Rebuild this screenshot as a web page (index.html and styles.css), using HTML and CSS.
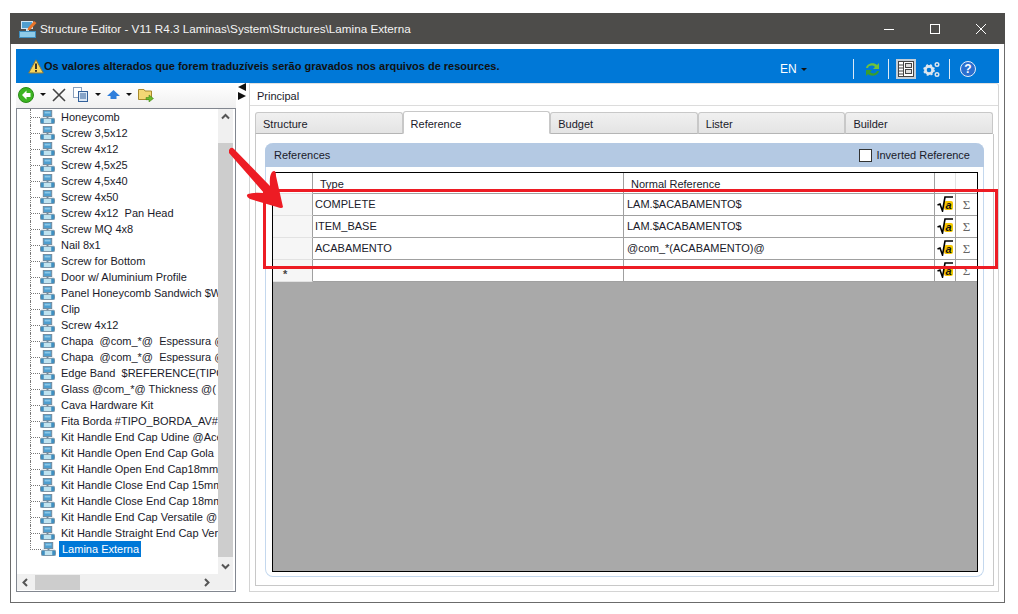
FILE: index.html
```html
<!DOCTYPE html>
<html>

<head>
  <title>Structure Editor</title>
  <link rel="stylesheet" href="styles.css">
</head>
<body>
  <svg class="defs" width="0" height="0">
    <symbol id="node" viewBox="0 0 16 16" preserveAspectRatio="none">
      <rect x="3.5" y="0.5" width="9" height="7" fill="#4f9fd0" stroke="#6f8799"/>
      <rect x="5" y="2" width="6" height="2" fill="#8cc8e8"/>
      <rect x="7" y="8" width="2" height="2" fill="#6f8799"/>
      <rect x="0.5" y="9.5" width="15" height="6" rx="1" fill="#bfe3f0" stroke="#6f8799"/>
      <rect x="1" y="10" width="3" height="5" fill="#3f8fc0"/>
      <rect x="12" y="10" width="3" height="5" fill="#3f8fc0"/>
    </symbol>
    <symbol id="sqrt" viewBox="0 0 17 16">
      <rect x="7" y="5" width="9" height="9" rx="2" fill="#f7c600"/>
      <path d="M0.5 9 L3 8 L5.5 15 L8 1 H16" fill="none" stroke="#000" stroke-width="1.6"/>
      <text x="8.5" y="13" class="sqrt-a">a</text>
    </symbol>
  </svg>

  <div class="window">
    <div class="titlebar">
      <svg class="app-icon" width="18" height="18" viewBox="0 0 18 18">
        <rect x="2.5" y="1.5" width="11" height="7" fill="#4f9fd0" stroke="#cfe6f4"/>
        <rect x="7" y="9" width="3" height="2" fill="#cfe6f4"/>
        <rect x="0.5" y="11.5" width="16" height="6" fill="#8fcbe8" stroke="#3f8fc0"/>
        <path d="M9 8 L15 1 L17.5 3 L11.5 9.5 L8.5 10.5 Z" fill="#e8752a"/>
      </svg>
      <span class="title">Structure Editor - V11 R4.3 Laminas\System\Structures\Lamina Externa</span>
      <div class="win-buttons">
        <svg width="12" height="12" viewBox="0 0 12 12"><path d="M1 6.5H11" stroke="#fff"/></svg>
        <svg width="12" height="12" viewBox="0 0 12 12"><rect x="1.5" y="1.5" width="9" height="9" fill="none" stroke="#fff"/></svg>
        <svg width="12" height="12" viewBox="0 0 12 12"><path d="M1 1L11 11M11 1L1 11" stroke="#fff"/></svg>
      </div>
    </div>

    <div class="content">
      <div class="notice">
        <svg class="warn" width="16" height="15" viewBox="0 0 16 15">
          <path d="M8 0.8 L15.3 14 H0.7 Z" fill="#f6d55c" stroke="#8a7a40"/>
          <rect x="7.1" y="4.5" width="1.8" height="5.5" fill="#222"/>
          <rect x="7.1" y="11" width="1.8" height="1.8" fill="#222"/>
        </svg>
        <b class="notice-text">Os valores alterados que forem traduzíveis serão gravados nos arquivos de resources.</b>
        <div class="notice-tools">
          <span class="lang">EN</span><span class="caret white-caret"></span>
          <span class="vsep sep1"></span>
          <svg class="sync" width="17" height="17" viewBox="0 0 17 17">
            <path d="M2 7 C3 2 10 1 13 4 L15 2 V8 H9 L11 6 C9 4 5 4 4 7 Z" fill="#6fc23c"/>
            <path d="M15 10 C14 15 7 16 4 13 L2 15 V9 H8 L6 11 C8 13 12 13 13 10 Z" fill="#3a9e2c"/>
          </svg>
          <span class="vsep sep2"></span>
          <span class="panel-btn">
            <svg width="16" height="16" viewBox="0 0 16 16">
              <rect x="0.5" y="0.5" width="15" height="15" fill="#fff" stroke="#444"/>
              <path d="M5.5 1V15M1 4H5M1 7H5M1 10H5M1 13H5" stroke="#444"/>
              <rect x="7.5" y="2.5" width="6" height="4" fill="#ddd" stroke="#444"/>
              <rect x="7.5" y="8.5" width="6" height="4" fill="#ddd" stroke="#444"/>
            </svg>
          </span>
          <svg class="gears" width="17" height="17" viewBox="0 0 17 17">
            <circle cx="6" cy="9" r="3.6" fill="none" stroke="#dfe6ee" stroke-width="2.6"/>
            <circle cx="6" cy="9" r="5" fill="none" stroke="#dfe6ee" stroke-width="1.6" stroke-dasharray="2 2"/>
            <circle cx="14" cy="3.5" r="1.8" fill="none" stroke="#dfe6ee" stroke-width="1.4"/>
            <circle cx="14" cy="13.5" r="1.8" fill="none" stroke="#dfe6ee" stroke-width="1.4"/>
          </svg>
          <span class="vsep sep3"></span>
          <span class="help">?</span>
        </div>
      </div>

      <div class="main">
        <div class="left">
          <div class="toolbar">
            <svg width="16" height="16" viewBox="0 0 16 16">
              <circle cx="8" cy="8" r="7.5" fill="#3cb521" stroke="#2a8a18"/>
              <path d="M8.5 3.5 L4 8 L8.5 12.5 V10 H12.5 V6 H8.5 Z" fill="#fff"/>
            </svg>
            <span class="caret"></span>
            <svg class="tool-x" width="14" height="14" viewBox="0 0 14 14"><path d="M1 1L13 13M13 1L1 13" stroke="#444" stroke-width="1.6"/></svg>
            <svg class="tool-copy" width="16" height="15" viewBox="0 0 16 15">
              <rect x="0.5" y="0.5" width="8" height="10" fill="#fff" stroke="#8aa0bb"/>
              <rect x="5.5" y="4.5" width="9" height="10" fill="#dbe8f6" stroke="#33609a"/>
              <path d="M7 7H13M7 9H13M7 11H13" stroke="#33609a"/>
            </svg>
            <span class="caret"></span>
            <svg class="tool-up" width="13" height="9" viewBox="0 0 13 9"><path d="M6.5 0L13 6H9.5V9H3.5V6H0Z" fill="#2f7fdc"/></svg>
            <span class="caret"></span>
            <svg class="tool-folder" width="16" height="15" viewBox="0 0 16 15">
              <path d="M0.5 2.5H6L7 4H13.5V12.5H0.5Z" fill="#f3d774" stroke="#a78a2c"/>
              <path d="M8 10.5H11V8L15.5 11.5L11 15V12.7H8Z" fill="#6cbb2c" stroke="#3a7d12" stroke-width="0.5"/>
            </svg>
          </div>
          <div class="tree">
            <div class="tree-rows">
              <div class="node"><svg class="node-icon"><use href="#node"/></svg><span>Honeycomb</span></div>
              <div class="node"><svg class="node-icon"><use href="#node"/></svg><span>Screw 3,5x12</span></div>
              <div class="node"><svg class="node-icon"><use href="#node"/></svg><span>Screw 4x12</span></div>
              <div class="node"><svg class="node-icon"><use href="#node"/></svg><span>Screw 4,5x25</span></div>
              <div class="node"><svg class="node-icon"><use href="#node"/></svg><span>Screw 4,5x40</span></div>
              <div class="node"><svg class="node-icon"><use href="#node"/></svg><span>Screw 4x50</span></div>
              <div class="node"><svg class="node-icon"><use href="#node"/></svg><span>Screw 4x12&nbsp; Pan Head</span></div>
              <div class="node"><svg class="node-icon"><use href="#node"/></svg><span>Screw MQ 4x8</span></div>
              <div class="node"><svg class="node-icon"><use href="#node"/></svg><span>Nail 8x1</span></div>
              <div class="node"><svg class="node-icon"><use href="#node"/></svg><span>Screw for Bottom</span></div>
              <div class="node"><svg class="node-icon"><use href="#node"/></svg><span>Door w/ Aluminium Profile</span></div>
              <div class="node"><svg class="node-icon"><use href="#node"/></svg><span>Panel Honeycomb Sandwich $W</span></div>
              <div class="node"><svg class="node-icon"><use href="#node"/></svg><span>Clip</span></div>
              <div class="node"><svg class="node-icon"><use href="#node"/></svg><span>Screw 4x12</span></div>
              <div class="node"><svg class="node-icon"><use href="#node"/></svg><span>Chapa&nbsp; @com_*@&nbsp; Espessura @</span></div>
              <div class="node"><svg class="node-icon"><use href="#node"/></svg><span>Chapa&nbsp; @com_*@&nbsp; Espessura @</span></div>
              <div class="node"><svg class="node-icon"><use href="#node"/></svg><span>Edge Band&nbsp; $REFERENCE(TIPO</span></div>
              <div class="node"><svg class="node-icon"><use href="#node"/></svg><span>Glass @com_*@ Thickness @(</span></div>
              <div class="node"><svg class="node-icon"><use href="#node"/></svg><span>Cava Hardware Kit</span></div>
              <div class="node"><svg class="node-icon"><use href="#node"/></svg><span>Fita Borda #TIPO_BORDA_AV#</span></div>
              <div class="node"><svg class="node-icon"><use href="#node"/></svg><span>Kit Handle End Cap Udine @Ace</span></div>
              <div class="node"><svg class="node-icon"><use href="#node"/></svg><span>Kit Handle Open End Cap Gola</span></div>
              <div class="node"><svg class="node-icon"><use href="#node"/></svg><span>Kit Handle Open End Cap18mm</span></div>
              <div class="node"><svg class="node-icon"><use href="#node"/></svg><span>Kit Handle Close End Cap 15mm</span></div>
              <div class="node"><svg class="node-icon"><use href="#node"/></svg><span>Kit Handle Close End Cap 18mm</span></div>
              <div class="node"><svg class="node-icon"><use href="#node"/></svg><span>Kit Handle End Cap Versatile @</span></div>
              <div class="node"><svg class="node-icon"><use href="#node"/></svg><span>Kit Handle Straight End Cap Ver</span></div>
              <div class="node last"><svg class="node-icon"><use href="#node"/></svg><span class="selected">Lamina Externa</span></div>
            </div>
            <div class="vscroll">
              <svg width="15" height="16" viewBox="0 0 15 16"><path d="M4 9.5L7.5 6L11 9.5" fill="none" stroke="#555" stroke-width="2"/></svg>
              <div class="vthumb"></div>
              <svg width="15" height="16" viewBox="0 0 15 16"><path d="M4 6.5L7.5 10L11 6.5" fill="none" stroke="#555" stroke-width="2"/></svg>
            </div>
            <div class="hscroll">
              <svg width="18" height="15" viewBox="0 0 18 15"><path d="M10 4L6.5 7.5L10 11" fill="none" stroke="#555" stroke-width="2"/></svg>
              <div class="hthumb"></div>
              <svg class="hright" width="18" height="15" viewBox="0 0 18 15"><path d="M7 4L10.5 7.5L7 11" fill="none" stroke="#555" stroke-width="2"/></svg>
            </div>
          </div>
        </div>

        <div class="splitter">
          <span class="tri-left"></span>
          <span class="tri-right"></span>
        </div>

        <div class="right">
          <div class="principal">Principal</div>
          <div class="tabs">
            <div class="tab">Structure</div>
            <div class="tab active">Reference</div>
            <div class="tab">Budget</div>
            <div class="tab">Lister</div>
            <div class="tab">Builder</div>
          </div>
          <div class="pane">
            <div class="group">
              <div class="group-head">
                <span class="group-title">References</span>
                <label class="check"><span class="box"></span>Inverted Reference</label>
              </div>
              <div class="grid">
                <div class="row head">
                  <div class="c0"></div>
                  <div class="c1 head-text">Type</div>
                  <div class="c2 head-text">Normal Reference</div>
                  <div class="c3"></div>
                  <div class="c4"></div>
                </div>
                <div class="row">
                  <div class="c0"></div>
                  <div class="c1">COMPLETE</div>
                  <div class="c2">LAM.$ACABAMENTO$</div>
                  <div class="c3"><svg class="sqrt-icon"><use href="#sqrt"/></svg></div>
                  <div class="c4">Σ</div>
                </div>
                <div class="row">
                  <div class="c0"></div>
                  <div class="c1">ITEM_BASE</div>
                  <div class="c2">LAM.$ACABAMENTO$</div>
                  <div class="c3"><svg class="sqrt-icon"><use href="#sqrt"/></svg></div>
                  <div class="c4">Σ</div>
                </div>
                <div class="row">
                  <div class="c0"></div>
                  <div class="c1">ACABAMENTO</div>
                  <div class="c2">@com_*(ACABAMENTO)@</div>
                  <div class="c3"><svg class="sqrt-icon"><use href="#sqrt"/></svg></div>
                  <div class="c4">Σ</div>
                </div>
                <div class="row">
                  <div class="c0 star">*</div>
                  <div class="c1"></div>
                  <div class="c2"></div>
                  <div class="c3"><svg class="sqrt-icon"><use href="#sqrt"/></svg></div>
                  <div class="c4">Σ</div>
                </div>
                <div class="grid-empty"></div>
              </div>
            </div>
          </div>
        </div>
      </div>
    </div>

    <svg class="marks" width="1018" height="614" viewBox="0 0 1018 614">
      <rect x="264.5" y="190.5" width="732" height="77" fill="none" stroke="#ed1c24" stroke-width="3"/>
      <path d="M229 150 Q231 146 234 149 L270 186 Q269 176 272 172 Q276 169 276 176 L283 207 Q282 209 277 207 L250 199 Q245 196 248 194 Q254 192 264 193 L229 153 Z" fill="#ed1c24"/>
    </svg>
  </div>
</body>
</html>
```

FILE: styles.css
```css
* {
  box-sizing: border-box;
}
html, body {
  margin: 0;
  height: 100%;
  background: #fff;
  overflow: hidden;
}
body {
  padding: 13px 13px 11px 10px;
  font-family: "Liberation Sans", Arial, sans-serif;
  font-size: 11px;
  color: #1a1a2a;
}
.defs {
  position: absolute;
}

.window {
  height: 590px;
  border: 1px solid #6b6b6b;
  border-top: 0;
  display: flex;
  flex-direction: column;
}
.marks {
  position: absolute;
  left: 0;
  top: 0;
  pointer-events: none;
}

/* title bar */
.titlebar {
  height: 31px;
  flex: none;
  margin: 0 -1px;
  background: #4d4c4a;
  color: #f4f4f4;
  display: flex;
  align-items: center;
  padding-left: 9px;
}
.title {
  margin-left: 3px;
  font-size: 11.7px;
}
.win-buttons {
  margin-left: auto;
  display: flex;
  gap: 34px;
  padding-right: 18px;
}

.content {
  flex: 1;
  min-height: 0;
  padding: 5px 5px 0;
  display: flex;
  flex-direction: column;
}

/* blue bar */
.notice {
  height: 34px;
  flex: none;
  background: #0078d7;
  display: flex;
  align-items: center;
  padding-left: 12px;
}
.warn {
  flex: none;
}
.notice-text {
  color: #111;
  font-size: 11px;
  white-space: nowrap;
  width: 736px;
}
.notice-tools {
  display: flex;
  align-items: center;
  margin-top: 6px;
}
.lang {
  color: #fff;
  width: 16px;
  font-size: 12px;
}
.caret {
  display: inline-block;
  flex: none;
  width: 0;
  height: 0;
  border: 3px solid transparent;
  border-top: 3px solid #111;
  border-bottom: 0;
}
.white-caret {
  margin-left: 5px;
}
.vsep {
  width: 1px;
  height: 20px;
  background: #dbe9f6;
  flex: none;
}
.sep1 {
  margin-left: 46px;
}
.sync {
  margin-left: 10px;
}
.sep2 {
  margin-left: 7px;
}
.panel-btn {
  width: 20px;
  height: 20px;
  background: #c5cfd8;
  margin-left: 7px;
  display: flex;
  align-items: center;
  justify-content: center;
}
.gears {
  margin-left: 7px;
}
.sep3 {
  margin-left: 9px;
}
.help {
  width: 16px;
  height: 16px;
  border-radius: 50%;
  margin-left: 10px;
  background: #2a6fd0;
  border: 1px solid #e6eef8;
  color: #fff;
  font-weight: bold;
  font-size: 12px;
  line-height: 14px;
  text-align: center;
}

.main {
  flex: 1;
  min-height: 0;
  display: flex;
}

/* left side */
.left {
  width: 220px;
  flex: none;
  display: flex;
  flex-direction: column;
}
.toolbar {
  height: 25px;
  flex: none;
  background: linear-gradient(#fff, #f0f0f0);
  display: flex;
  align-items: center;
  padding: 0 0 2px 2px;
}
.toolbar .caret {
  margin-left: 6px;
}
.tool-x {
  margin-left: 6px;
}
.tool-copy {
  margin-left: 7px;
}
.tool-up {
  margin-left: 6px;
}
.tool-folder {
  margin-left: 6px;
}
.tree {
  width: 220px;
  height: 484px;
  border: 1px solid #828790;
  background: #fff;
  display: grid;
  grid-template-columns: 201px 15px;
  grid-template-rows: 465px 16px;
  overflow: hidden;
}
.tree-rows {
  overflow: hidden;
  padding-left: 13px;
}
.node {
  height: 16px;
  display: flex;
  align-items: center;
  white-space: nowrap;
  border-left: 1px dotted #777;
}
.node::before {
  content: "";
  width: 9px;
  flex: none;
  border-top: 1px dotted #777;
}
.node.last {
  border-left: 0;
}
.node.last::before {
  width: 10px;
  height: 9px;
  margin-top: -8px;
  border-top: 0;
  border-bottom: 1px dotted #777;
  border-left: 1px dotted #777;
}
.node-icon {
  width: 15px;
  height: 14px;
  flex: none;
  margin-right: 3px;
}
.node span {
  padding: 0 2px 0 3px;
}
.selected {
  background: #0078d7;
  color: #fff;
  line-height: 16px;
}
.vscroll {
  background: #f0f0f0;
  display: flex;
  flex-direction: column;
  justify-content: space-between;
}
.vthumb {
  height: 414px;
  margin-top: 17px;
  background: #cdcdcd;
}
.hscroll {
  grid-column: 1 / 3;
  background: #f0f0f0;
  display: flex;
  align-items: center;
}
.hthumb {
  width: 45px;
  height: 15px;
  background: #cdcdcd;
}
.hright {
  margin-left: auto;
  margin-right: 17px;
}

/* splitter */
.splitter {
  width: 13px;
  flex: none;
  display: flex;
  flex-direction: column;
  padding-left: 2px;
}
.tri-left, .tri-right {
  width: 0;
  height: 0;
  border-top: 4px solid transparent;
  border-bottom: 4px solid transparent;
}
.tri-left {
  border-right: 8px solid #111;
  margin-bottom: 1px;
}
.tri-right {
  border-left: 8px solid #111;
}

/* right side */
.right {
  width: 750px;
  flex: none;
  height: 509px;
  border: 1px solid #d4d4d4;
  border-top-color: #e0e0e0;
  border-radius: 0 3px 0 0;
  display: flex;
  flex-direction: column;
}
.principal {
  height: 22px;
  flex: none;
  padding: 6px 0 0 7px;
  border-bottom: 1px solid #dcdcdc;
  line-height: 13px;
}
.tabs {
  display: flex;
  margin: 6px 0 0 5px;
  height: 22px;
  flex: none;
}
.tab {
  width: 147.6px;
  height: 22px;
  background: linear-gradient(#f0f0f0, #e4e4e4);
  border: 1px solid #c8c8c8;
  border-bottom: 1px solid #b5b5b5;
  border-radius: 3px 3px 0 0;
  padding: 5px 0 0 7px;
  line-height: 13px;
}
.tab.active {
  background: #fff;
  border-bottom-color: #fff;
  height: 23px;
  margin-top: -1px;
  padding-top: 6px;
  position: relative;
}
.pane {
  width: 739px;
  height: 452px;
  margin-left: 5px;
  border: 1px solid #c8c8c8;
  border-top: 0;
  padding: 9px 9px 8px 9px;
}
.group {
  height: 434px;
  border: 1px solid #c4d8ee;
  border-top: 0;
  border-radius: 8px;
}
.group-head {
  height: 24px;
  margin: 0 -1px;
  background: #b4c9e3;
  border-radius: 8px 8px 0 0;
  display: flex;
  align-items: center;
  padding: 0 14px 0 9px;
}
.check {
  margin-left: auto;
  display: flex;
  align-items: center;
}
.box {
  width: 13px;
  height: 13px;
  background: #fff;
  border: 1px solid #333;
  margin-right: 4px;
}

/* grid */
.grid {
  width: 706px;
  height: 400px;
  margin: 5px 0 0 6px;
  border: 1px solid #000;
  background: #a9a9a9;
  display: flex;
  flex-direction: column;
}
.row {
  display: grid;
  grid-template-columns: 40px 311px 311px 21px 21px;
  height: 22px;
  flex: none;
  background: #fff;
  border-bottom: 1px solid #a0a0a0;
  line-height: 21px;
}
.row.head {
  height: 21px;
}
.row > div {
  padding-left: 2px;
  border-right: 1px solid #a0a0a0;
  overflow: hidden;
  white-space: nowrap;
}
.row > .c2 {
  padding-left: 3px;
}
.row.head > .c3, .row.head > .c4 {
  border-right-color: #e2e2e2;
}
.row > .c4 {
  border-right: 0;
  padding: 0;
  text-align: center;
  color: #666;
  font-family: "Liberation Serif", serif;
  font-size: 13px;
}
.row > .c0 {
  background: #f6f6f6;
  border-bottom: 1px solid #e2e2e2;
  margin-bottom: -1px;
}
.row.head > .c0 {
  background: #fff;
}
.row > .c3 {
  padding: 2px 0 0 2px;
}
.head-text {
  line-height: 23px;
}
.row > .head-text {
  padding-left: 7px;
}
.row > .star {
  line-height: 28px;
  padding-left: 10px;
  font-weight: bold;
  color: #444;
}
.sqrt-icon {
  width: 17px;
  height: 16px;
  display: block;
}
.sqrt-a {
  font-family: "Liberation Sans", sans-serif;
  font-size: 11px;
  font-weight: bold;
  font-style: italic;
  fill: #111;
}
.grid-empty {
  flex: 1;
}
```
